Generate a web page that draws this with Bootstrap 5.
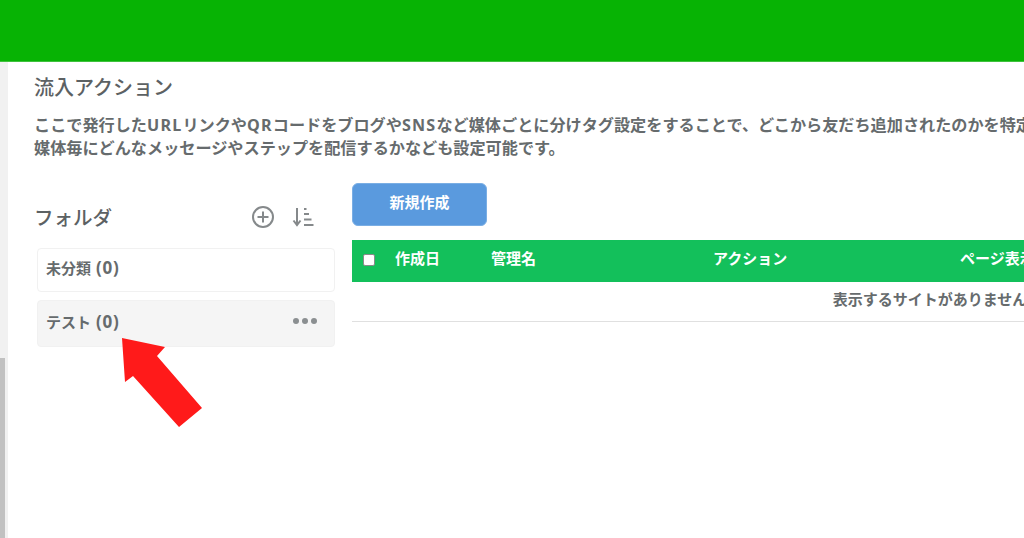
<!DOCTYPE html>
<html lang="ja">
<head>
    <meta charset="UTF-8">
    <meta name="viewport" content="width=device-width, initial-scale=1.0">
    <title>流入アクション</title>
    <link rel="stylesheet" href="https://cdn.jsdelivr.net/npm/bootstrap@5.3.0/dist/css/bootstrap.min.css">
    <style>
        html, body { height: 538px; overflow: hidden; }
        body { font-family: "Noto Sans", "Noto Sans CJK JP", sans-serif; color: #5c6163; background: #fff; font-weight: 500; }
        .top-bar { height: 62px; background: #07b304; border-bottom: 1px solid #3fc23d; }
        .page-wrap { height: 476px; }
        .side-gutter { width: 8px; flex: none; background: #f1f1f1; padding-top: 296px; }
        .scroll-thumb { width: 5px; height: 180px; background: #c1c1c1; }
        .page-main { padding: 14px 0 0 26px; min-width: 1500px; }
        .page-title { font-size: 20px; line-height: 24px; margin: 0 0 14px; font-weight: 500; color: #5c6163; }
        .page-desc { font-size: 16.15px; line-height: 23px; margin: 0 0 23px; white-space: nowrap; font-weight: 700; color: #666b6d; }
        .latin-run { letter-spacing: 1.2px; }
        .folder-col { width: 301px; flex: none; margin-right: 17px; }
        .folder-head { height: 50px; margin-bottom: 15px; padding: 0 20px 3px 0; }
        .folder-title { font-size: 19.5px; line-height: 24px; margin: 0; font-weight: 500; color: #5c6163; }
        .folder-tools { margin-bottom: 1px; }
        .folder-item { margin-left: 3px; border: 1px solid #f1f1f1; border-radius: 4px; font-size: 15px; font-weight: 700; color: #666b6d; padding: 0 8px; background: #fff; }
        .folder-first { height: 44px; margin-bottom: 8px; padding-bottom: 5px; }
        .folder-active { height: 47px; background: #f5f5f5; padding-bottom: 4px; }
        .item-count { font-size: 17px; letter-spacing: .8px; margin-left: 1px; }
        .dots-btn { gap: 3px; padding: 0 9px 2px 0; }
        .dot-mark { width: 6px; height: 6px; border-radius: 50%; background: #8b8f91; }
        .list-col { width: 1156px; flex: none; }
        .new-btn { width: 135px; height: 43px; padding-bottom: 10px; background: #5a9ade; border-color: #7aaee4; color: #fff; font-size: 15px; font-weight: 700; margin-bottom: 14px; }
        .site-table { table-layout: fixed; width: 1156px; margin: 0; font-size: 15px; }
        .site-table thead th { background: #13c05b; color: #fff; height: 42px; padding: 0 0 6px 10px; font-weight: 700; border: 0; vertical-align: middle; }
        .site-table td { height: 39px; padding: 0 0 5px; color: #666b6d; border-bottom: 1px solid #e0e0e0; vertical-align: middle; text-align: center; font-size: 15px; font-weight: 700; }
        .col-check { width: 33px; }
        .col-date { width: 96px; }
        .col-name { width: 222px; }
        .col-action { width: 247px; }
        .check-box { display: block; width: 12px; height: 12px; background: #fff; border: 1.5px solid #8a8a8a; border-radius: 2px; margin: 4px 0 0 1px; }
        .pointer-arrow { position: absolute; left: 0; top: 0; width: 1024px; height: 538px; pointer-events: none; }
    </style>
</head>
<body class="position-relative">
    <div class="top-bar"></div>

    <div class="page-wrap d-flex">
        <div class="side-gutter">
            <div class="scroll-thumb"></div>
        </div>

        <div class="page-main">
            <h1 class="page-title">流入アクション</h1>
            <p class="page-desc">ここで発行した<span class="latin-run">URL</span>リンクや<span class="latin-run">QR</span>コードをブログや<span class="latin-run">SNS</span>など媒体ごとに分けタグ設定をすることで、どこから友だち追加されたのかを特定<br>媒体毎にどんなメッセージやステップを配信するかなども設定可能です。</p>

            <div class="d-flex">
                <!-- フォルダ -->
                <div class="folder-col">
                    <div class="folder-head d-flex align-items-end justify-content-between">
                        <h2 class="folder-title">フォルダ</h2>
                        <div class="folder-tools d-flex align-items-center gap-3">
                            <svg width="24" height="24" viewBox="0 0 24 24" fill="none" stroke="#85898b" stroke-width="2"><circle cx="12" cy="12" r="10"/><path d="M12 6.500v11M6.500 12h11"/></svg>
                            <svg width="24" height="24" viewBox="0 0 24 24" fill="none" stroke="#85898b" stroke-width="2"><path d="M6 3v17M2.500 15.500 6 20l3.500-4.500"/><path d="M13 4h2.500M13 9h5M13 14.500h7.500M13 20h9.500"/></svg>
                        </div>
                    </div>
                    <div class="folder-item folder-first d-flex align-items-center"><span>未分類 <span class="item-count">(0)</span></span></div>
                    <div class="folder-item folder-active d-flex align-items-center justify-content-between">
                        <span>テスト <span class="item-count">(0)</span></span>
                        <span class="dots-btn d-flex"><span class="dot-mark"></span><span class="dot-mark"></span><span class="dot-mark"></span></span>
                    </div>
                </div>

                <!-- 一覧 -->
                <div class="list-col">
                    <button class="btn new-btn" type="button">新規作成</button>
                    <table class="table site-table">
                        <thead>
                            <tr>
                                <th class="col-check"><span class="check-box"></span></th>
                                <th class="col-date">作成日</th>
                                <th class="col-name">管理名</th>
                                <th class="col-action">アクション</th>
                                <th>ページ表示</th>
                            </tr>
                        </thead>
                        <tbody>
                            <tr><td colspan="5">表示するサイトがありません</td></tr>
                        </tbody>
                    </table>
                </div>
            </div>
        </div>
    </div>

    <svg class="pointer-arrow" viewBox="0 0 1024 538"><polygon fill="#ff1a1a" points="122,338 165,347 157,356 202,408 179,427 133,376 125,382"/></svg>
</body>
</html>
